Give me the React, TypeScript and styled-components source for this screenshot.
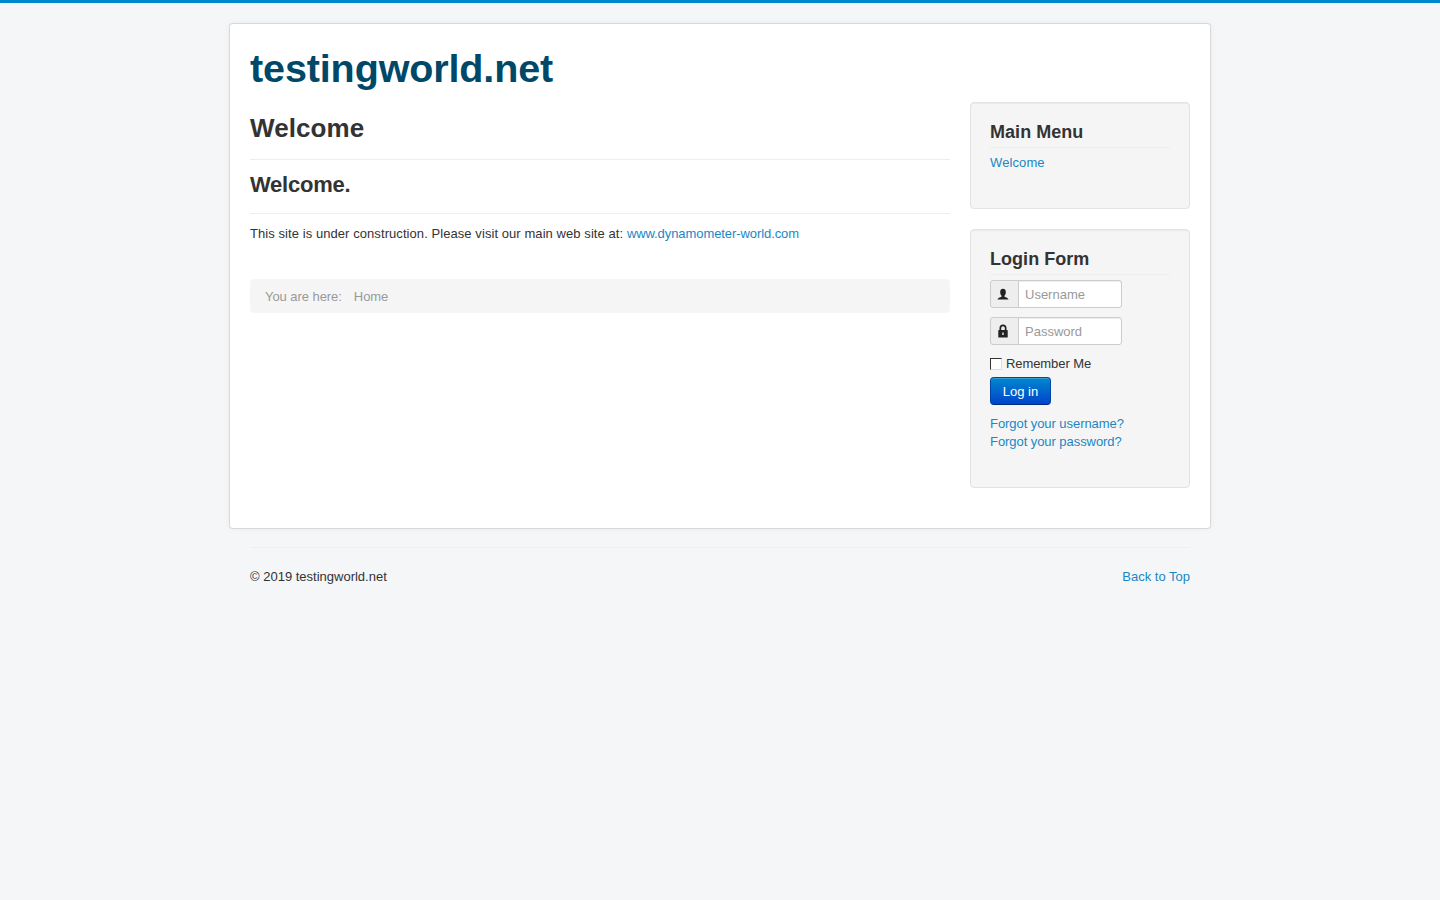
import React from "react";
import styled, { createGlobalStyle } from "styled-components";

const Global = createGlobalStyle`
  html, body { margin: 0; padding: 0; }
  body {
    min-height: 900px;
    box-sizing: border-box;
    background: #f4f6f7;
    border-top: 3px solid #0088cc;
    padding-top: 20px;
    font-family: "Liberation Sans", Arial, sans-serif;
    font-size: 13px;
    line-height: 18px;
    color: #333;
  }
  * { box-sizing: border-box; }
`;

const Page = styled.div`
  width: 982px;
  margin: 0 auto;
`;

const Card = styled.div`
  background: #fff;
  border: 1px solid rgba(0, 0, 0, 0.15);
  border-radius: 4px;
  padding: 20px;
  height: 506px;
  box-shadow: 0 0 6px rgba(0, 0, 0, 0.05);
`;

const Brand = styled.a`
  display: block;
  height: 58px;
  font-size: 39.5px;
  font-weight: 700;
  line-height: 48px;
  letter-spacing: -0.12px;
  color: #004868;
  text-decoration: none;
`;

const Columns = styled.div`
  display: flex;
  gap: 20px;
`;

const Main = styled.main`
  width: 700px;
`;

const PageTitle = styled.h1`
  margin: 0;
  height: 58px;
  padding-top: 12px;
  font-size: 26px;
  line-height: 28px;
  letter-spacing: 0.1px;
  font-weight: 700;
  color: #333;
  border-bottom: 1px solid #eee;
`;

const ArticleTitle = styled.h2`
  margin: 0;
  height: 54px;
  padding-top: 12px;
  font-size: 22px;
  line-height: 26px;
  letter-spacing: -0.25px;
  font-weight: 700;
  color: #333;
  border-bottom: 1px solid #eee;
`;

const Paragraph = styled.p`
  margin: 11px 0 0;
  height: 54px;
  letter-spacing: 0.07px;
`;

const Link = styled.a<{ $tight?: boolean }>`
  color: #1a87c4;
  text-decoration: none;
  letter-spacing: ${(p) => (p.$tight ? "-0.08px" : "inherit")};
`;

const Breadcrumb = styled.div`
  display: flex;
  height: 34px;
  align-items: center;
  padding: 2px 15px 0;
  background: #f5f5f5;
  border-radius: 4px;
  color: #999;
  gap: 12px;
  letter-spacing: -0.06px;
`;

const Sidebar = styled.aside`
  width: 220px;
  display: flex;
  flex-direction: column;
  gap: 20px;
`;

const Well = styled.section<{ $height: number }>`
  height: ${(p) => p.$height}px;
  padding: 19px;
  background: #f5f5f5;
  border: 1px solid #e3e3e3;
  border-radius: 4px;
  box-shadow: inset 0 1px 1px rgba(0, 0, 0, 0.05);
`;

const WellTitle = styled.h3`
  margin: 0 0 5px;
  height: 26px;
  font-size: 18px;
  line-height: 20px;
  letter-spacing: 0.04px;
  font-weight: 700;
  color: #333;
  border-bottom: 1px solid #eee;
`;

const MenuItem = styled.div`
  padding-top: 1px;
  letter-spacing: 0.1px;
`;

const InputGroup = styled.div`
  display: flex;
  width: 132px;
  height: 28px;
  margin-bottom: 9px;
`;

const AddOn = styled.span`
  display: flex;
  align-items: center;
  justify-content: center;
  width: 29px;
  padding-right: 4px;
  background: #eee;
  border: 1px solid #ccc;
  border-radius: 3px 0 0 3px;
`;

const Input = styled.input`
  width: 104px;
  margin-left: -1px;
  padding: 0 6px;
  font: 13px "Liberation Sans", Arial, sans-serif;
  background: #fff;
  border: 1px solid #ccc;
  border-radius: 0 3px 3px 0;
  box-shadow: inset 0 1px 1px rgba(0, 0, 0, 0.075);
  &::placeholder { color: #999; opacity: 1; }
`;

const Remember = styled.label`
  display: flex;
  align-items: center;
  gap: 4px;
  height: 18px;
  margin-top: 10px;
  letter-spacing: -0.08px;
`;

const Check = styled.input`
  appearance: none;
  width: 12px;
  height: 12px;
  margin: 0;
  background: #fff;
  border-style: solid;
  border-width: 1px;
  border-color: #333 #ddd #ddd #333;
`;

const Button = styled.button`
  display: block;
  width: 61px;
  height: 28px;
  margin: 4px 0 10px;
  padding: 0;
  font: 13px "Liberation Sans", Arial, sans-serif;
  color: #fff;
  background: linear-gradient(#0088cc, #0044cc);
  border: 1px solid #0044aa;
  border-bottom-color: #002a80;
  border-radius: 4px;
  box-shadow: inset 0 1px 0 rgba(255, 255, 255, 0.2);
`;

const LinkLine = styled.div`
  height: 18px;
  letter-spacing: -0.06px;
`;

const Footer = styled.footer`
  margin: 18px 21px 0;
  padding-top: 20px;
  border-top: 1px solid #eef0f1;
  display: flex;
  justify-content: space-between;
`;

const UserIcon = () => (
  <svg width="12" height="13" viewBox="0 0 12 13" fill="#222">
    <path d="M4.5 7.800C3.700 7 3.200 5.600 3.200 4 3.200 1.800 4.300.8 6 .8s2.800 1 2.800 3.200c0 1.600-.5 3-1.300 3.800v1c1.700.5 3.600 1.200 4 2.700H.5c.4-1.500 2.300-2.200 4-2.700z" />
  </svg>
);

const LockIcon = () => (
  <svg width="12" height="14" viewBox="0 0 12 14" fill="#222">
    <path
      fillRule="evenodd"
      d="M2.500 6V4a3.500 3.500 0 0 1 7 0v2h.7a.5.5 0 0 1 .5.500v6.500a.5.5 0 0 1-.5.5H1.800a.5.5 0 0 1-.5-.5V6.500a.5.5 0 0 1 .5-.5zM4.200 6h3.600V4a1.800 1.800 0 0 0-3.600 0zM5.300 8.500v2.500h1.400V8.500z"
    />
  </svg>
);

export default function App() {
  return (
    <Page>
      <Global />
      <Card>
        <Brand href="#">testingworld.net</Brand>
        <Columns>
          <Main>
            <PageTitle>Welcome</PageTitle>
            <ArticleTitle>Welcome.</ArticleTitle>
            <Paragraph>
              This site is under construction. Please visit our main web site at:{" "}
              <Link href="#" $tight>www.dynamometer-world.com</Link>
            </Paragraph>
            <Breadcrumb>
              <span>You are here:</span>
              <span>Home</span>
            </Breadcrumb>
          </Main>
          <Sidebar>
            <Well $height={107}>
              <WellTitle>Main Menu</WellTitle>
              <MenuItem><Link href="#">Welcome</Link></MenuItem>
            </Well>
            <Well $height={259}>
              <WellTitle>Login Form</WellTitle>
              <InputGroup>
                <AddOn><UserIcon /></AddOn>
                <Input placeholder="Username" />
              </InputGroup>
              <InputGroup>
                <AddOn><LockIcon /></AddOn>
                <Input placeholder="Password" type="password" />
              </InputGroup>
              <Remember>
                <Check type="checkbox" />
                Remember Me
              </Remember>
              <Button>Log in</Button>
              <LinkLine><Link href="#">Forgot your username?</Link></LinkLine>
              <LinkLine><Link href="#">Forgot your password?</Link></LinkLine>
            </Well>
          </Sidebar>
        </Columns>
      </Card>
      <Footer>
        <span>© 2019 testingworld.net</span>
        <Link href="#">Back to Top</Link>
      </Footer>
    </Page>
  );
}
